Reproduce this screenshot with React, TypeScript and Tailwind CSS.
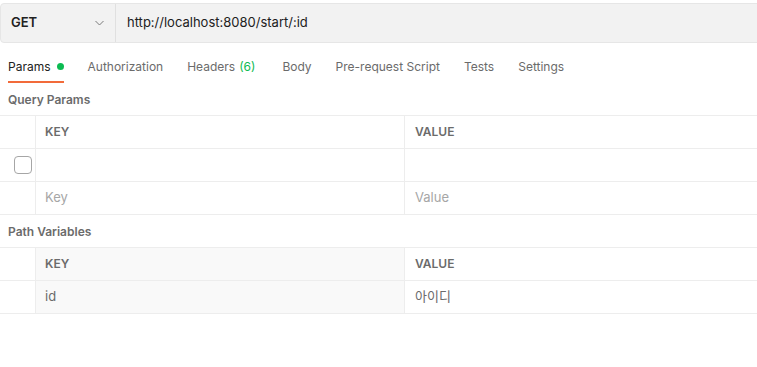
import React from "react";

const tabs = [
  { label: "Params", active: true, dot: true },
  { label: "Authorization" },
  { label: "Headers", count: "(6)" },
  { label: "Body" },
  { label: "Pre-request Script" },
  { label: "Tests" },
  { label: "Settings" },
];

const Chevron = () => (
  <svg width="9" height="6" viewBox="0 0 9 6" fill="none">
    <path d="M0.5 1l4 4 4-4" stroke="#7a7a7a" strokeWidth="1" />
  </svg>
);

type Cell = { text?: string; muted?: boolean; checkbox?: boolean; header?: boolean; gray?: boolean };

const Row = ({ cells }: { cells: Cell[] }) => (
  <div className="flex h-[33px] border-b border-[#ededed]">
    <div className="w-[36px] shrink-0 border-r border-[#ededed] flex items-center pl-[14px]">
      {cells[0]?.checkbox && (
        <div className="w-[18px] h-[18px] rounded-[4px] border border-[#a6a6a6] bg-white" />
      )}
    </div>
    <div
      className={`w-[369px] shrink-0 border-r border-[#ededed] flex items-center pl-[9px] ${
        cells[1]?.gray ? "bg-[#f9f9f9]" : ""
      }`}
    >
      <Text cell={cells[1]} />
    </div>
    <div className="flex-1 flex items-center pl-[10px]">
      <Text cell={cells[2]} />
    </div>
  </div>
);

const Text = ({ cell }: { cell?: Cell }) => {
  if (!cell?.text) return null;
  if (cell.header)
    return <span className="text-[12px] font-semibold text-[#6b6b6b]">{cell.text}</span>;
  return (
    <span className={`text-[13px] ${cell.muted ? "text-[#a6a6a6]" : "text-[#6b6b6b]"}`}>
      {cell.text}
    </span>
  );
};

export default function App() {
  return (
    <div
      className="w-[757px] h-[367px] bg-white overflow-hidden"
      style={{ fontFamily: "Inter, 'Noto Sans CJK KR', sans-serif" }}
    >
      <div className="pt-[3px]">
        <div className="flex h-[40px] w-[770px] bg-[#f2f2f2] border border-[#e6e6e6] rounded-l-[4px]">
          <div className="w-[115px] shrink-0 flex items-center justify-between pl-[10px] pr-[11px] border-r border-[#e0e0e0]">
            <span className="text-[13px] font-semibold text-[#212121]">GET</span>
            <Chevron />
          </div>
          <div className="flex items-center pl-[11px] text-[13px] text-[#212121]">
            http://localhost:8080/start/:id
          </div>
        </div>
      </div>

      <div className="flex gap-6 px-2 h-[40px]">
        {tabs.map((t) => (
          <div
            key={t.label}
            className={`flex items-center gap-[6px] pt-[9px] text-[12px] border-b-2 ${
              t.active ? "border-[#f26b3a] text-[#212121]" : "border-transparent text-[#6b6b6b]"
            }`}
          >
            <span>
              {t.label}
              {t.count && <span className="text-[#0cbb52] ml-1 mr-[3px]">{t.count}</span>}
            </span>
            {t.dot && <span className="w-[7px] h-[7px] rounded-full bg-[#0cbb52]" />}
          </div>
        ))}
      </div>

      <div className="px-2 pt-[1px] h-[32px] flex items-center text-[12px] font-semibold text-[#6b6b6b]">
        Query Params
      </div>
      <div className="border-t border-[#ededed]">
        <Row cells={[{}, { text: "KEY", header: true }, { text: "VALUE", header: true }]} />
        <Row cells={[{ checkbox: true }, {}, {}]} />
        <Row cells={[{}, { text: "Key", muted: true }, { text: "Value", muted: true }]} />
      </div>

      <div className="px-2 pt-[1px] h-[32px] flex items-center text-[12px] font-semibold text-[#6b6b6b]">
        Path Variables
      </div>
      <div className="border-t border-[#ededed]">
        <Row cells={[{}, { text: "KEY", header: true, gray: true }, { text: "VALUE", header: true }]} />
        <Row cells={[{}, { text: "id", gray: true }, { text: "아이디" }]} />
      </div>
    </div>
  );
}
